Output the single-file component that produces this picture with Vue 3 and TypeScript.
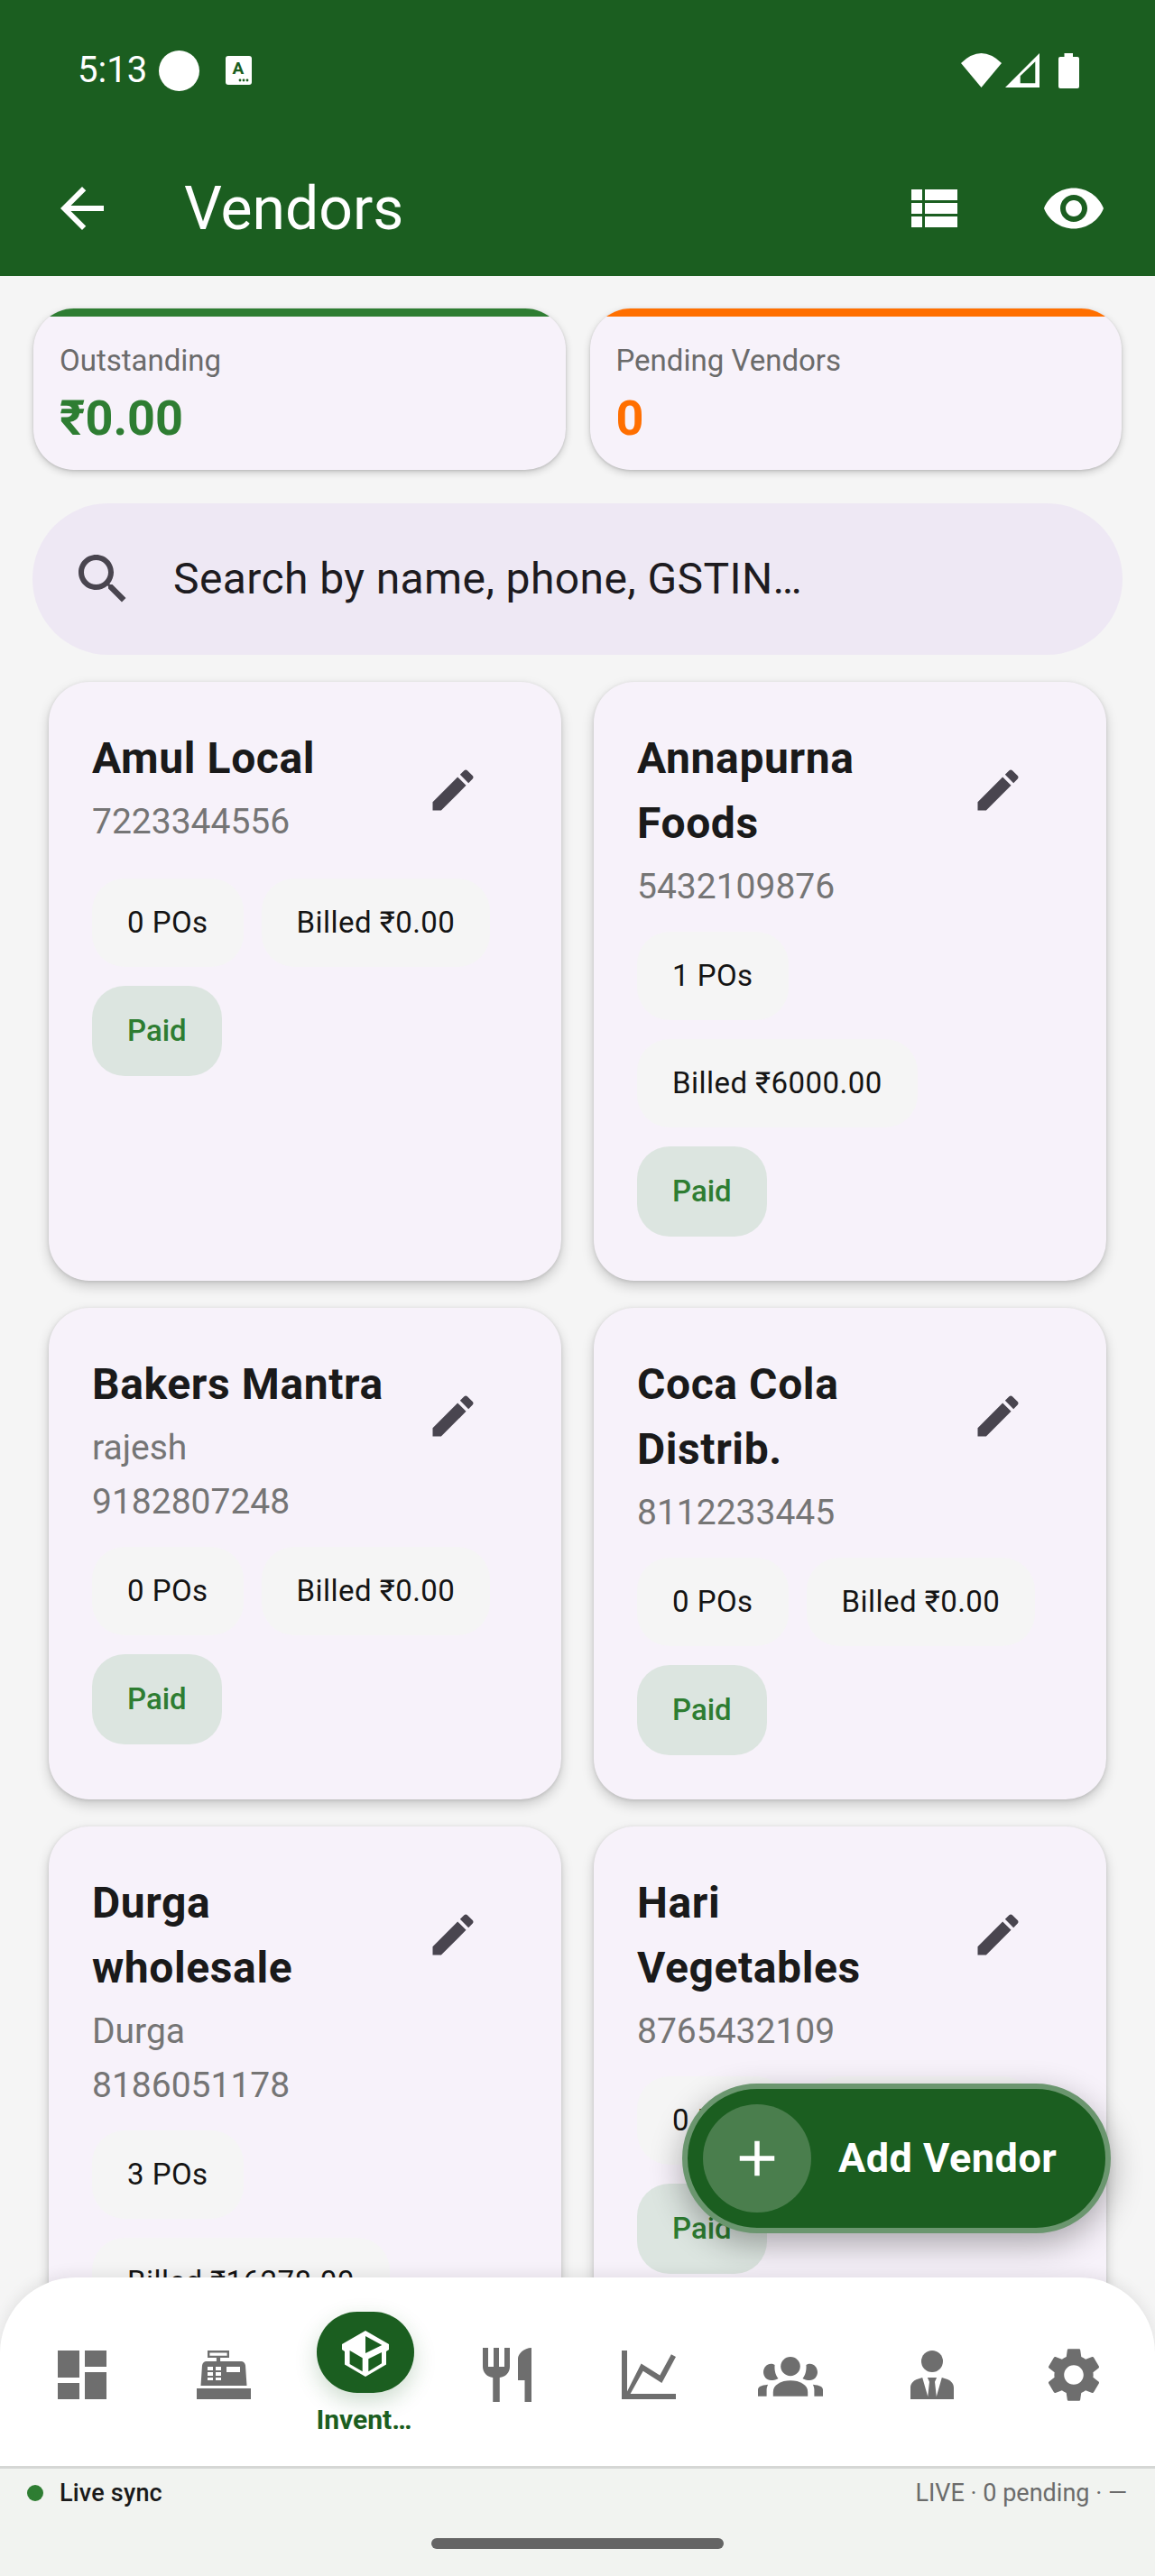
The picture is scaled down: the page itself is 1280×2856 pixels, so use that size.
<script setup lang="ts">
interface Vendor {
  name: string
  lines: string[]
  pos: string
  billed: string
}

const vendors: Vendor[] = [
  { name: 'Amul Local', lines: ['7223344556'], pos: '0 POs', billed: 'Billed ₹0.00' },
  { name: 'Annapurna Foods', lines: ['5432109876'], pos: '1 POs', billed: 'Billed ₹6000.00' },
  { name: 'Bakers Mantra', lines: ['rajesh', '9182807248'], pos: '0 POs', billed: 'Billed ₹0.00' },
  { name: 'Coca Cola Distrib.', lines: ['8112233445'], pos: '0 POs', billed: 'Billed ₹0.00' },
  { name: 'Durga wholesale', lines: ['Durga', '8186051178'], pos: '3 POs', billed: 'Billed ₹16278.00' },
  { name: 'Hari Vegetables', lines: ['8765432109'], pos: '0 POs', billed: 'Billed ₹0.00' },
]

const navIcons: { key: string; paths: string[] }[] = [
  { key: 'dashboard', paths: ['M3 13h8V3H3v10zm0 8h8v-6H3v6zm10 0h8V11h-8v10zm0-18v6h8V3h-8z'] },
  {
    key: 'pos',
    paths: [
      'M2 17h20v4H2z',
      'M3.5 16 4 8.5C4.1 7.6 4.8 7 5.6 7h3.7V5.7H6V3h8v2.7h-3.3V7h7.7c.8 0 1.5.6 1.6 1.5l.5 7.5zM6.8 3.8v1.1h6.4V3.8zM6 9v1.3h2V9zm3 0v1.3h2V9zm4 0v2h5V9zM6 11v1.3h2V11zm3 0v1.3h2V11zM6 13v1h2v-1zm3 0v1h2v-1z',
    ],
  },
  {
    key: 'inventory',
    paths: [
      'M12 4l8.67 5v2l-1 .7v4.8L12 21l-7.67-4.5v-4.8l-1-.7V9zM12 6v6.3l6.1-3zM6.2 11.3v5l4.7 2.8v-5zM13.1 14.4v4.7l4.9-3v-4.1z',
    ],
  },
  {
    key: 'restaurant',
    paths: ['M11 9H9V2H7v7H5V2H3v7c0 2.12 1.66 3.88 3.75 3.97V22h2.5v-9.03C11.34 12.88 13 11.12 13 9V2h-2v7zm5-3v8h2.5v8H21V2c-2.76 0-5 2.24-5 4z'],
  },
  {
    key: 'chart',
    paths: ['M2 3h2v15.2l5.2-10.4 6.9 4.4L20.3 4.4l1.7.9-5.2 9.7-6.9-4.4L5.2 19H22v2H2z'],
  },
  {
    key: 'groups',
    paths: [
      'M12 5.3c2 0 3.6 1.6 3.6 3.55S14 12.4 12 12.4 8.4 10.8 8.4 8.85 10 5.3 12 5.3z',
      'M5.6 19.9v-1.6c0-2.6 2.9-4.2 6.4-4.2s6.4 1.6 6.4 4.2v1.6z',
      'M4.8 7.9c.5 0 1 .1 1.4.4-.2 1.8.2 3.7 1.3 5-.5.4-1.6.7-2.7.7C3.3 14 2 12.7 2 11s1.3-3.1 2.8-3.1z',
      'M19.2 7.9c-.5 0-1 .1-1.4.4.2 1.8-.2 3.7-1.3 5 .5.4 1.6.7 2.7.7 1.5 0 2.8-1.3 2.8-3s-1.3-3.1-2.8-3.1z',
      'M0 19.9v-2.4c0-1 1-1.6 3.7-1.9-.3.6-.5 1.3-.5 2v2.3z',
      'M24 19.9v-2.4c0-1-1-1.6-3.7-1.9.3.6.5 1.3.5 2v2.3z',
    ],
  },
  {
    key: 'person',
    paths: [
      'M12 3a4 4 0 1 1 0 8 4 4 0 0 1 0-8z',
      'M4 21v-4.2c0-1.4.9-2.5 2.3-3.1L8.4 13l2 7h3.2l2-7 2.1.7c1.4.6 2.3 1.7 2.3 3.1V21z',
      'M10.3 13h3.4l-.7 1.6.6 5.4h-3.2l.6-5.4z',
    ],
  },
  {
    key: 'settings',
    paths: ['M19.14 12.94c.04-.3.06-.61.06-.94 0-.32-.02-.64-.07-.94l2.03-1.58c.18-.14.23-.41.12-.61l-1.92-3.32c-.12-.22-.37-.29-.59-.22l-2.39.96c-.5-.38-1.03-.7-1.62-.94l-.36-2.54c-.04-.24-.24-.41-.48-.41h-3.84c-.24 0-.43.17-.47.41l-.36 2.54c-.59.24-1.13.57-1.62.94l-2.39-.96c-.22-.08-.47 0-.59.22L2.74 8.87c-.12.21-.08.47.12.61l2.03 1.58c-.05.3-.09.63-.09.94s.02.64.07.94l-2.03 1.58c-.18.14-.23.41-.12.61l1.92 3.32c.12.22.37.29.59.22l2.39-.96c.5.38 1.03.7 1.62.94l.36 2.54c.05.24.24.41.48.41h3.84c.24 0 .44-.17.47-.41l.36-2.54c.59-.24 1.13-.56 1.62-.94l2.39.96c.22.08.47 0 .59-.22l1.92-3.32c.12-.22.07-.47-.12-.61l-2.01-1.58zM12 15.6c-1.98 0-3.6-1.62-3.6-3.6s1.62-3.6 3.6-3.6 3.6 1.62 3.6 3.6-1.62 3.6-3.6 3.6z'],
  },
]
</script>

<template>
  <div class="screen">
    <header class="top">
      <div class="status">
        <span class="clock">5:13</span>
        <span class="dot-white"></span>
        <svg class="a-icon" width="29" height="32" viewBox="0 0 29 32">
          <rect width="29" height="32" rx="3" fill="#fff" />
          <text x="14" y="20" text-anchor="middle" class="a-letter">A</text>
          <circle cx="16" cy="27" r="1.4" fill="#1b5e20" />
          <circle cx="20" cy="27" r="1.4" fill="#1b5e20" />
          <circle cx="24" cy="27" r="1.4" fill="#1b5e20" />
        </svg>
        <span class="grow"></span>
        <svg class="sys wifi" width="45" height="38" viewBox="0 0 45 38"><path d="M0 11Q22.5-11 45 11L22.5 38z" fill="#fff" /></svg>
        <svg class="sys signal" width="38" height="38" viewBox="0 0 38 38"><path fill-rule="evenodd" d="M0 38 38 0v38zM16.7 25.3v8h16.6v-24z" fill="#fff" /></svg>
        <svg class="sys battery" width="23" height="39" viewBox="0 0 23 39"><path d="M6.5 0H16v4h5a2 2 0 0 1 2 2v31a2 2 0 0 1-2 2H2a2 2 0 0 1-2-2V6a2 2 0 0 1 2-2h4.500z" fill="#fff" /></svg>
      </div>
      <div class="appbar">
        <svg class="i72" viewBox="0 0 24 24"><path d="M20 11H7.830l5.590-5.590L12 4l-8 8 8 8 1.410-1.410L7.830 13H20v-2z" fill="#fff" /></svg>
        <h1 class="title">Vendors</h1>
        <svg class="i72" viewBox="0 0 24 24"><path d="M4 14h4v-4H4v4zm0 5h4v-4H4v4zm0-10h4V5H4v4zm5 5h12v-4H9v4zm0 5h12v-4H9v4zM9 5v4h12V5H9z" fill="#fff" /></svg>
        <svg class="i72 eye" viewBox="0 0 24 24"><path d="M12 4.500C7 4.500 2.730 7.610 1 12c1.730 4.390 6 7.500 11 7.500s9.270-3.110 11-7.500c-1.730-4.390-6-7.500-11-7.500zM12 17c-2.760 0-5-2.240-5-5s2.240-5 5-5 5 2.240 5 5-2.240 5-5 5zm0-8c-1.660 0-3 1.340-3 3s1.340 3 3 3 3-1.340 3-3-1.340-3-3-3z" fill="#fff" /></svg>
      </div>
    </header>

    <main class="body">
      <section class="stats">
        <div class="stat stat-green">
          <div class="stat-bar"></div>
          <div class="stat-label">Outstanding</div>
          <div class="stat-value">₹0.00</div>
        </div>
        <div class="stat stat-orange">
          <div class="stat-bar"></div>
          <div class="stat-label">Pending Vendors</div>
          <div class="stat-value">0</div>
        </div>
      </section>

      <div class="search">
        <svg class="i72" viewBox="0 0 24 24"><path d="M15.500 14h-.79l-.28-.27C15.410 12.590 16 11.110 16 9.500 16 5.910 13.090 3 9.500 3S3 5.910 3 9.500 5.910 16 9.500 16c1.610 0 3.090-.59 4.230-1.570l.27.28v.79l5 4.990L20.490 19l-4.990-5zm-6 0C7.010 14 5 11.990 5 9.500S7.010 5 9.500 5 14 7.010 14 9.500 11.990 14 9.500 14z" fill="#49454f" /></svg>
        <span class="search-text">Search by name, phone, GSTIN…</span>
      </div>

      <section class="grid">
        <article v-for="v in vendors" :key="v.name" class="card">
          <div class="head">
            <div class="who">
              <div class="name">{{ v.name }}</div>
              <div class="lines">
                <div v-for="l in v.lines" :key="l" class="line">{{ l }}</div>
              </div>
            </div>
            <div class="edit">
              <svg width="60" height="60" viewBox="0 0 24 24"><path d="M3 17.250V21h3.750L17.810 9.940l-3.750-3.750L3 17.250zM20.710 7.040c.39-.39.39-1.020 0-1.410l-2.340-2.340c-.39-.39-1.020-.39-1.410 0l-1.830 1.830 3.750 3.750 1.830-1.830z" fill="#49454f" /></svg>
            </div>
          </div>
          <div class="chips">
            <span class="chip">{{ v.pos }}</span>
            <span class="chip">{{ v.billed }}</span>
          </div>
          <div class="paid">Paid</div>
        </article>
      </section>
    </main>

    <button class="fab" type="button">
      <span class="fab-plus">
        <svg width="66" height="66" viewBox="0 0 24 24"><path d="M19 13h-6v6h-2v-6H5v-2h6V5h2v6h6v2z" fill="#fff" /></svg>
      </span>
      <span class="fab-text">Add Vendor</span>
    </button>

    <nav class="nav">
      <div v-for="n in navIcons" :key="n.key" class="nav-item" :class="{ active: n.key === 'inventory' }">
        <template v-if="n.key === 'inventory'">
          <div class="pill">
            <svg class="i72" viewBox="0 0 24 24"><path v-for="p in n.paths" :key="p" :d="p" fill="#fff" fill-rule="evenodd" /></svg>
          </div>
          <div class="nav-label">Invent…</div>
        </template>
        <svg v-else class="i72" viewBox="0 0 24 24"><path v-for="p in n.paths" :key="p" :d="p" fill="#6e6e6e" fill-rule="evenodd" /></svg>
      </div>
    </nav>

    <footer class="foot">
      <div class="sync">
        <span class="sync-dot"></span>
        <span class="sync-left">Live sync</span>
        <span class="grow"></span>
        <span class="sync-right">LIVE · 0 pending · —</span>
      </div>
      <div class="home"></div>
    </footer>
  </div>
</template>

<style scoped>
.screen {
  position: relative;
  width: 1280px;
  height: 2856px;
  display: flex;
  flex-direction: column;
  overflow: hidden;
  background: #f5f5f5;
  font-family: Roboto, "Liberation Sans", sans-serif;
}
.grow { flex: 1; }
.i72 { width: 72px; height: 72px; flex: none; display: block; }

.top { background: #1b5e20; height: 306px; flex: none; }
.status {
  height: 156px;
  display: flex;
  align-items: center;
  padding: 0 84px 0 86px;
  color: #fff;
}
.clock { font-size: 40px; width: 90px; line-height: 48px; }
.dot-white { width: 45px; height: 45px; border-radius: 50%; background: #fff; }
.a-icon { margin-left: 29px; }
.a-letter { font: 700 19px Roboto, sans-serif; fill: #1b5e20; }
.sys { flex: none; }
.signal { margin-left: 4px; }
.battery { margin-left: 21px; }

.appbar {
  height: 150px;
  display: flex;
  align-items: center;
  padding: 0 54px 0 55px;
  color: #fff;
}
.title {
  margin: 2px 0 0 77px;
  flex: 1;
  font-size: 66px;
  font-weight: 400;
  line-height: 76px;
}
.eye { margin-left: 84px; }

.body { flex: 1; min-height: 0; overflow: hidden; padding-top: 36px; }
.stats {
  display: grid;
  grid-template-columns: 1fr 1fr;
  gap: 27px;
  padding: 0 37px;
}
.stat {
  height: 179px;
  box-sizing: border-box;
  padding: 0 29px;
  border-radius: 45px;
  background: #f7f2fa;
  box-shadow: 0 3px 9px rgba(0, 0, 0, .18), 0 1px 3px rgba(0, 0, 0, .12);
  overflow: hidden;
}
.stat-bar { height: 9px; margin: 0 -29px 25px; }
.stat-green .stat-bar { background: #2e7d32; }
.stat-orange .stat-bar { background: #ff6f00; }
.stat-label { font-size: 33px; line-height: 48px; color: #6b6b6b; }
.stat-value { font-size: 54px; line-height: 64px; font-weight: 700; margin-top: 8px; }
.stat-green .stat-value { color: #2e7d32; }
.stat-orange .stat-value { color: #ff6f00; }

.search {
  margin: 37px 36px 0;
  height: 168px;
  border-radius: 84px;
  background: #eee8f4;
  display: flex;
  align-items: center;
  padding-left: 42px;
}
.search-text {
  margin-left: 42px;
  font-size: 48px;
  letter-spacing: .4px;
  color: #1d1b20;
  line-height: 72px;
}

.grid {
  display: grid;
  grid-template-columns: 1fr 1fr;
  gap: 30px 36px;
  padding: 30px 54px 0;
}
.card {
  background: #f7f2fa;
  border-radius: 45px;
  padding: 48px 48px 49px;
  box-shadow: 0 6px 14px rgba(0, 0, 0, .18), 0 1px 4px rgba(0, 0, 0, .12);
  min-width: 0;
}
.head { display: flex; min-height: 150px; }
.who { flex: 1; min-width: 0; padding-top: 1px; }
.name { font-size: 48px; line-height: 72px; font-weight: 700; color: #1a1a1a; letter-spacing: .6px; }
.lines { margin-top: 4px; }
.line { font-size: 39px; line-height: 60px; color: #757575; }
.edit {
  flex: none;
  width: 144px;
  height: 144px;
  display: flex;
  align-items: center;
  justify-content: center;
}
.chips {
  display: flex;
  flex-wrap: wrap;
  gap: 21px 20px;
  margin-top: 20px;
}
.chip {
  padding: 25px 39px;
  font-size: 33px;
  line-height: 48px;
  font-weight: 400;
  letter-spacing: .45px;
  color: #141414;
  background: #f5f5f5;
  border-radius: 36px;
}
.paid {
  width: fit-content;
  margin-top: 21px;
  padding: 26px 39px;
  font-size: 33px;
  line-height: 48px;
  font-weight: 500;
  color: #2e7d32;
  background: #dce5e0;
  border-radius: 36px;
}

.fab {
  position: absolute;
  left: 756px;
  top: 2310px;
  width: 475px;
  height: 166px;
  box-sizing: border-box;
  border: 6px solid #6b966f;
  border-radius: 83px;
  background: #1b5e20;
  padding: 0 0 0 17px;
  display: flex;
  align-items: center;
  gap: 30px;
  box-shadow: 0 12px 36px rgba(0, 0, 0, .32);
  font-family: inherit;
}
.fab-plus {
  width: 120px;
  height: 120px;
  border-radius: 50%;
  background: #4a7e4d;
  display: flex;
  align-items: center;
  justify-content: center;
}
.fab-text { font-size: 45px; font-weight: 700; color: #fff; line-height: 60px; letter-spacing: .5px; }

.nav {
  position: relative;
  z-index: 2;
  flex: none;
  height: 209px;
  margin-top: -84px;
  box-sizing: border-box;
  padding: 0 12px;
  display: flex;
  background: #fff;
  border-radius: 84px 84px 0 0;
  box-shadow: 0 -4px 16px rgba(0, 0, 0, .08);
}
.nav-item {
  flex: 1;
  display: flex;
  flex-direction: column;
  align-items: center;
  padding-top: 72px;
}
.nav-item.active { padding-top: 38px; }
.pill {
  width: 108px;
  height: 90px;
  border-radius: 45px;
  background: #1b5e20;
  display: flex;
  align-items: center;
  justify-content: center;
  box-shadow: 0 9px 24px rgba(27, 94, 32, .22);
}
.nav-label {
  width: 108px;
  margin-top: 12px;
  font-size: 30px;
  line-height: 36px;
  font-weight: 700;
  color: #1b5e20;
  white-space: nowrap;
}

.foot {
  position: relative;
  z-index: 2;
  flex: none;
  height: 122px;
  box-sizing: border-box;
  background: #f1f3f0;
  border-top: 3px solid #d5d7d5;
  display: flex;
  flex-direction: column;
  align-items: center;
}
.sync {
  align-self: stretch;
  display: flex;
  align-items: center;
  height: 36px;
  margin-top: 9px;
  padding: 0 31px 0 30px;
  font-size: 27px;
  line-height: 36px;
}
.sync-dot { width: 18px; height: 18px; border-radius: 50%; background: #2e7d32; }
.sync-left { margin-left: 18px; font-weight: 500; color: #1a1a1a; letter-spacing: .2px; }
.sync-right { color: #6b6b6b; }
.home {
  margin-top: 32px;
  width: 324px;
  height: 12px;
  border-radius: 6px;
  background: #646464;
}
</style>

<style>
html, body { margin: 0; padding: 0; }
</style>
